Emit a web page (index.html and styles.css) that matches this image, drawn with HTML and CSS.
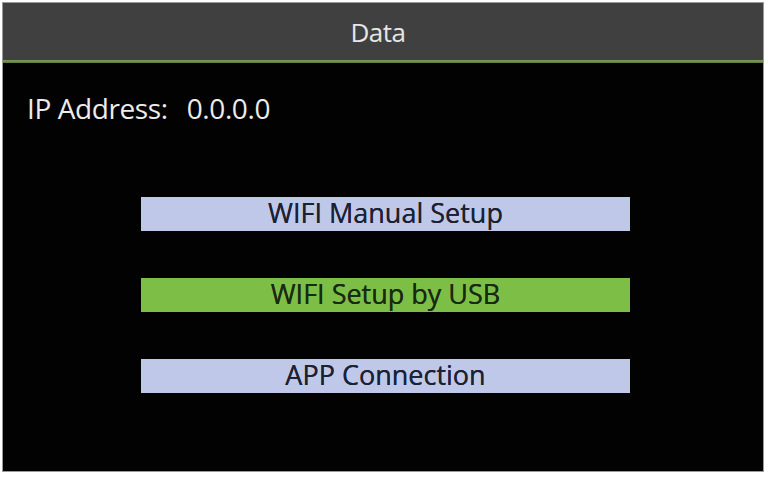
FILE: index.html
```html
<!DOCTYPE html>
<html>
<head>
<meta charset="utf-8">
<link rel="stylesheet" href="styles.css">
</head>
<body>
<div class="screen">
  <div class="header">Data</div>
  <div class="divider"></div>
  <div class="content">
    <div class="ip"><span class="ip-label">IP Address:</span><span class="ip-value">0.0.0.0</span></div>
    <div class="menu">
      <div class="btn">WIFI Manual Setup</div>
      <div class="btn btn-active">WIFI Setup by USB</div>
      <div class="btn">APP Connection</div>
    </div>
  </div>
</div>
</body>
</html>
```
FILE: styles.css
```css
html, body {
  margin: 0;
  padding: 0;
  background: #ffffff;
}
body {
  width: 768px;
  height: 477px;
  overflow: hidden;
  font-family: "Open Sans", "Noto Sans", sans-serif;
}
.screen {
  margin: 2px 0 0 2px;
  width: 760px;
  height: 468px;
  background: #020202;
  border: 1px solid #9a9a9a;
  display: flex;
  flex-direction: column;
}
.header {
  height: 57px;
  padding-right: 10px;
  background: #404040;
  color: #e6e6e6;
  font-size: 26px;
  display: flex;
  align-items: center;
  justify-content: center;
  letter-spacing: -0.5px;
}
.divider {
  height: 3px;
  background: linear-gradient(#7f9a5c, #5f7c3c);
}
.content {
  flex: 1;
  display: flex;
  flex-direction: column;
}
.ip {
  padding: 26px 0 0 24px;
  color: #ececec;
  font-size: 28px;
  line-height: 38px;
  letter-spacing: -0.4px;
  display: flex;
  gap: 19px;
}
.menu {
  margin: 70px 0 0 138px;
  width: 489px;
  display: flex;
  flex-direction: column;
  gap: 47px;
}
.btn {
  height: 34px;
  background: #c0c8ea;
  color: #1c2233;
  font-size: 27px;
  line-height: 31px;
  text-align: center;
  letter-spacing: 0;
  text-shadow: 0 0 0.4px currentColor;
}
.btn-active {
  background: #7dbe46;
  color: #1a2a12;
}
```
